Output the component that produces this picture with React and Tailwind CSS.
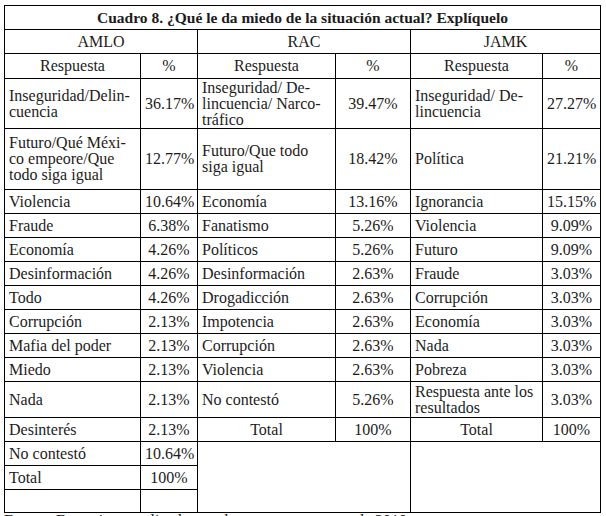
const rows = [
  {
    h: "h-[50px]",
    a: ["Inseguridad/Delin-", "cuencia"],
    ap: "36.17%",
    r: ["Inseguridad/ De-", "lincuencia/ Narco-", "tráfico"],
    rp: "39.47%",
    j: ["Inseguridad/ De-", "lincuencia"],
    jp: "27.27%",
  },
  {
    h: "h-[61px]",
    a: ["Futuro/Qué Méxi-", "co empeore/Que", "todo siga igual"],
    ap: "12.77%",
    r: ["Futuro/Que todo", "siga igual"],
    rp: "18.42%",
    j: ["Política"],
    jp: "21.21%",
  },
  { a: ["Violencia"], ap: "10.64%", r: ["Economía"], rp: "13.16%", j: ["Ignorancia"], jp: "15.15%" },
  { a: ["Fraude"], ap: "6.38%", r: ["Fanatismo"], rp: "5.26%", j: ["Violencia"], jp: "9.09%" },
  { a: ["Economía"], ap: "4.26%", r: ["Políticos"], rp: "5.26%", j: ["Futuro"], jp: "9.09%" },
  { a: ["Desinformación"], ap: "4.26%", r: ["Desinformación"], rp: "2.63%", j: ["Fraude"], jp: "3.03%" },
  { a: ["Todo"], ap: "4.26%", r: ["Drogadicción"], rp: "2.63%", j: ["Corrupción"], jp: "3.03%" },
  { a: ["Corrupción"], ap: "2.13%", r: ["Impotencia"], rp: "2.63%", j: ["Economía"], jp: "3.03%" },
  { a: ["Mafia del poder"], ap: "2.13%", r: ["Corrupción"], rp: "2.63%", j: ["Nada"], jp: "3.03%" },
  { a: ["Miedo"], ap: "2.13%", r: ["Violencia"], rp: "2.63%", j: ["Pobreza"], jp: "3.03%" },
  {
    h: "h-[36px]",
    a: ["Nada"],
    ap: "2.13%",
    r: ["No contestó"],
    rp: "5.26%",
    j: ["Respuesta ante los", "resultados"],
    jp: "3.03%",
  },
];

const td =
  "border border-black px-[4px] align-middle leading-[16px] whitespace-nowrap font-['Liberation_Serif','Times_New_Roman',serif]";

function Lines({ items }) {
  return items.map((t, i) => (
    <span key={i}>
      {i > 0 && <br />}
      {t}
    </span>
  ));
}

export default function App() {
  return (
    <div className="w-[606px] h-[516px] overflow-hidden bg-white text-[#1c1c1c] text-[16px] font-['Liberation_Serif','Times_New_Roman',serif]">
      <table className="table-fixed border-collapse w-[596px] ml-[4px] mt-[5px]">
        <colgroup>
          <col className="w-[136px]" />
          <col className="w-[57px]" />
          <col className="w-[138px]" />
          <col className="w-[75px]" />
          <col className="w-[132px]" />
          <col className="w-[58px]" />
        </colgroup>
        <tbody>
          <tr className="h-[24px]">
            <td colSpan={6} className={`${td} text-center font-bold text-[15.5px]`}>
              Cuadro 8. ¿Qué le da miedo de la situación actual? Explíquelo
            </td>
          </tr>
          <tr className="h-[24px]">
            <td colSpan={2} className={`${td} text-center`}>AMLO</td>
            <td colSpan={2} className={`${td} text-center`}>RAC</td>
            <td colSpan={2} className={`${td} text-center`}>JAMK</td>
          </tr>
          <tr className="h-[25px]">
            <td className={`${td} text-center`}>Respuesta</td>
            <td className={`${td} text-center`}>%</td>
            <td className={`${td} text-center`}>Respuesta</td>
            <td className={`${td} text-center`}>%</td>
            <td className={`${td} text-center`}>Respuesta</td>
            <td className={`${td} text-center`}>%</td>
          </tr>
          {rows.map((r, i) => (
            <tr key={i} className={r.h || "h-[24px]"}>
              <td className={td}><Lines items={r.a} /></td>
              <td className={`${td} text-center`}>{r.ap}</td>
              <td className={td}><Lines items={r.r} /></td>
              <td className={`${td} text-center`}>{r.rp}</td>
              <td className={td}><Lines items={r.j} /></td>
              <td className={`${td} text-center`}>{r.jp}</td>
            </tr>
          ))}
          <tr className="h-[24px]">
            <td className={td}>Desinterés</td>
            <td className={`${td} text-center`}>2.13%</td>
            <td className={`${td} text-center`}>Total</td>
            <td className={`${td} text-center`}>100%</td>
            <td className={`${td} text-center`}>Total</td>
            <td className={`${td} text-center`}>100%</td>
          </tr>
          <tr className="h-[24px]">
            <td className={td}>No contestó</td>
            <td className={`${td} text-center`}>10.64%</td>
            <td rowSpan={3} colSpan={2} className={td}></td>
            <td rowSpan={3} colSpan={2} className={td}></td>
          </tr>
          <tr className="h-[24px]">
            <td className={td}>Total</td>
            <td className={`${td} text-center`}>100%</td>
          </tr>
          <tr className="h-[23px]">
            <td className={td}></td>
            <td className={td}></td>
          </tr>
        </tbody>
      </table>
      <div className="pl-[4px] leading-[16px] whitespace-nowrap">
        Fuente: Entrevistas realizadas por los autores en enero de 2019.
      </div>
    </div>
  );
}
